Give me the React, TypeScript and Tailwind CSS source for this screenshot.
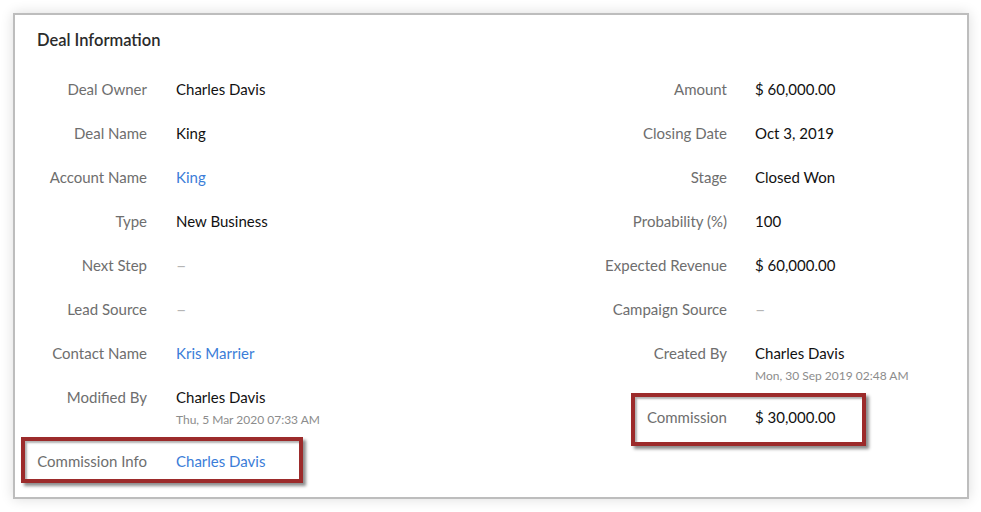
import React from "react";

type Field = {
  label: string;
  value: string;
  kind?: "link" | "empty";
  stamp?: string;
};

const leftFields: Field[] = [
  { label: "Deal Owner", value: "Charles Davis" },
  { label: "Deal Name", value: "King" },
  { label: "Account Name", value: "King", kind: "link" },
  { label: "Type", value: "New Business" },
  { label: "Next Step", value: "", kind: "empty" },
  { label: "Lead Source", value: "", kind: "empty" },
  { label: "Contact Name", value: "Kris Marrier", kind: "link" },
  { label: "Modified By", value: "Charles Davis", stamp: "Thu, 5 Mar 2020 07:33 AM" },
];

const rightFields: Field[] = [
  { label: "Amount", value: "$ 60,000.00" },
  { label: "Closing Date", value: "Oct 3, 2019" },
  { label: "Stage", value: "Closed Won" },
  { label: "Probability (%)", value: "100" },
  { label: "Expected Revenue", value: "$ 60,000.00" },
  { label: "Campaign Source", value: "", kind: "empty" },
  { label: "Created By", value: "Charles Davis", stamp: "Mon, 30 Sep 2019 02:48 AM" },
];

const Value = ({ field }: { field: Field }) => {
  if (field.kind === "empty")
    return <span className="text-[18px] leading-5 text-[#b5b5b5]">–</span>;
  return (
    <div className="flex flex-col">
      <span className={field.kind === "link" ? "text-[#3b7dd8]" : "text-[#111]"}>
        {field.value}
      </span>
      {field.stamp && (
        <span className="mt-[5px] text-[12px] leading-4 text-[#8c8c8c]">{field.stamp}</span>
      )}
    </div>
  );
};

const Row = ({ field, labelWidth, gap }: { field: Field; labelWidth: string; gap: string }) => (
  <div className={`flex items-start pt-3 ${field.stamp ? "pb-[11px]" : "pb-3"} ${gap}`}>
    <div className={`${labelWidth} shrink-0 text-right text-[#6e6e6e]`}>{field.label}</div>
    <Value field={field} />
  </div>
);

const highlight =
  "border-4 border-[#9c2b2b] shadow-[3px_3px_3px_rgba(0,0,0,0.45),inset_2px_2px_2px_rgba(0,0,0,0.3)] bg-white";

export default function App() {
  return (
    <div className="w-[981px] h-[512px] bg-white pt-[13px] pl-[13px] font-['Lato',sans-serif] text-[15px] leading-5">
      <div className="w-[956px] h-[486px] border-2 border-[#bdbdbd] shadow-[0_0_12px_rgba(0,0,0,0.14)] bg-white pl-[22px] pt-[15px]">
        <h2 className="text-[16.5px] font-semibold text-[#2b2b2b] leading-5">Deal Information</h2>
        <div className="mt-[17px] flex">
          <div className="w-[540px] flex flex-col">
            {leftFields.map((f) => (
              <Row key={f.label} field={f} labelWidth="w-[110px]" gap="gap-[29px]" />
            ))}
            <div className={`-ml-[16px] -mt-[2px] w-[282px] h-[46px] pl-[12px] pt-[10px] flex items-start gap-[29px] ${highlight}`}>
              <div className="w-[110px] shrink-0 text-right text-[#6e6e6e]">Commission Info</div>
              <span className="text-[#3b7dd8]">Charles Davis</span>
            </div>
          </div>
          <div className="flex flex-col">
            {rightFields.map((f) => (
              <Row key={f.label} field={f} labelWidth="w-[150px]" gap="gap-[28px]" />
            ))}
            <div className={`ml-[54px] -mt-[2px] w-[235px] h-[53px] pt-[10px] flex items-start gap-[28px] ${highlight}`}>
              <div className="w-[92px] shrink-0 text-right text-[#6e6e6e]">Commission</div>
              <span className="text-[#111]">$ 30,000.00</span>
            </div>
          </div>
        </div>
      </div>
    </div>
  );
}
